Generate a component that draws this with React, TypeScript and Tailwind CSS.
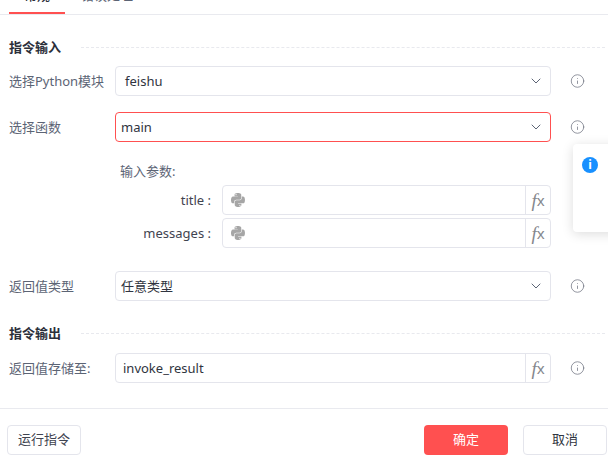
import { ChevronDown, Info } from 'lucide-react';
import { FaPython } from 'react-icons/fa';

const font = { fontFamily: '"Noto Sans", "Noto Sans CJK SC", sans-serif' };

function InfoTip() {
  return (
    <div className="ml-[19px] flex w-[15px] shrink-0 items-center justify-center text-[#6f7380]">
      <Info size={18} strokeWidth={1.2} />
    </div>
  );
}

function SectionTitle({ title }: { title: string }) {
  return (
    <div className="flex h-4 items-center pl-[9px] pr-[3px]">
      <span className="w-[72px] shrink-0 pt-px text-[13px] font-bold text-[#2b2f3a]">{title}</span>
      <div className="flex-1 border-t border-dashed border-[#e8e9ee]" />
    </div>
  );
}

function FxAddon() {
  return (
    <div className="flex w-[25px] shrink-0 items-center justify-center border-l border-[#e4e5ec] text-[#85878d]">
      <span className="font-['Liberation_Serif'] text-[19px] italic leading-none">f</span>
      <span className="text-[15px] font-normal leading-none">x</span>
    </div>
  );
}

function SelectRow({
  label,
  value,
  active,
  textPad = 'pl-[5px]',
}: {
  label: string;
  value: string;
  active?: boolean;
  textPad?: string;
}) {
  return (
    <div className="flex h-[30px] items-center pl-[9px]">
      <label className="w-[106px] shrink-0 whitespace-nowrap pt-px text-[13px] text-[#5c6475]">{label}</label>
      <div
        className={`flex h-[30px] w-[436px] shrink-0 items-center justify-between rounded border bg-white pr-[6px] ${active ? 'border-[#ff5050]' : 'border-[#e4e5ec]'}`}
      >
        <span className={`pt-px text-[13px] text-[#2f3440] ${textPad}`}>{value}</span>
        <ChevronDown size={16} strokeWidth={1.5} className="text-[#5c6475]" />
      </div>
      <InfoTip />
    </div>
  );
}

function ParamRow({ name }: { name: string }) {
  return (
    <div className="flex h-[30px] items-center">
      <span className="w-[101px] shrink-0 pr-[11px] pt-px text-right text-[13px] text-[#3f4450]">{name} :</span>
      <div className="flex h-[30px] w-[329px] shrink-0 items-center justify-between rounded border border-[#e4e5ec] bg-white">
        <FaPython size={16} className="ml-[7px] text-[#a6a6a6]" />
        <div className="flex h-full">
          <FxAddon />
        </div>
      </div>
    </div>
  );
}

export default function App() {
  return (
    <div className="relative flex h-[470px] w-[608px] flex-col overflow-hidden bg-white" style={font}>
      {/* tabs, top is cut off */}
      <div className="flex h-[15px] shrink-0 items-end gap-4 overflow-hidden border-b border-[#e9eaef] pl-[9px]">
        <div className="flex h-[30px] w-14 shrink-0 items-center justify-center border-b-2 border-[#ff5050] pb-1 text-[13px] font-medium text-[#2b2f3a]">
          常规
        </div>
        <div className="flex h-[30px] shrink-0 items-center pb-[6px] text-[13px] text-[#5c6475]">
          错误处理
        </div>
      </div>

      <div className="flex flex-1 flex-col pt-6">
        <SectionTitle title="指令输入" />
        <div className="mt-[11px] flex flex-col gap-4">
          <SelectRow label="选择Python模块" value="feishu" textPad="pl-[9px]" />
          <SelectRow label="选择函数" value="main" active />
        </div>

        <div className="mt-[20px] pl-[120px] pt-px text-[13px] leading-[17px] text-[#5c6475]">输入参数:</div>
        <div className="mt-[5px] flex flex-col gap-[3px] pl-[121px]">
          <ParamRow name="title" />
          <ParamRow name="messages" />
        </div>

        <div className="mt-[23px]">
          <SelectRow label="返回值类型" value="任意类型" />
        </div>

        <div className="mt-6">
          <SectionTitle title="指令输出" />
        </div>

        <div className="mt-3 flex h-[30px] items-center pl-[9px]">
          <label className="w-[106px] shrink-0 whitespace-nowrap pt-px text-[13px] text-[#5c6475]">返回值存储至:</label>
          <div className="flex h-[30px] w-[436px] shrink-0 items-center justify-between rounded border border-[#e4e5ec] bg-white">
            <span className="pl-[7px] pt-px text-[13px] text-[#2f3440]">invoke_result</span>
            <div className="flex h-full">
              <FxAddon />
            </div>
          </div>
          <InfoTip />
        </div>
      </div>

      <div className="flex h-[62px] shrink-0 items-start justify-between border-t border-[#e9eaef] pl-[7px] pr-px pt-4">
        <button type="button" className="h-[30px] w-[74px] rounded border border-[#e4e5ec] bg-white text-[13px] text-[#3f4450]">
          运行指令
        </button>
        <div className="flex gap-[15px]">
          <button type="button" className="h-[30px] w-[84px] rounded bg-[#ff5050] text-[13px] text-white">
            确定
          </button>
          <button type="button" className="h-[30px] w-[84px] rounded border border-[#e4e5ec] bg-white text-[13px] text-[#2f3440]">
            取消
          </button>
        </div>
      </div>

      {/* notification toast sliding in from the right */}
      <div className="absolute left-[573px] top-[144px] h-[88px] w-[300px] rounded bg-white p-3 shadow-[0_2px_12px_rgba(0,0,0,0.14)]">
        <div className="absolute left-[9px] top-[13px] flex h-4 w-4 items-center justify-center rounded-full bg-[#1890ff] text-[12px] font-bold leading-none text-white">
          i
        </div>
      </div>
    </div>
  );
}
